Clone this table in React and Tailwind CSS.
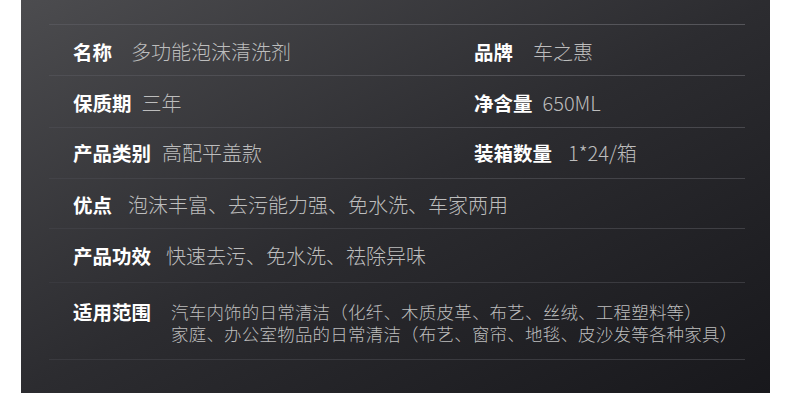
import React from 'react';

const font = { fontFamily: '"Noto Sans CJK SC", "Noto Sans", sans-serif' };

function Item({ label, value, gap }) {
  return (
    <div className="flex items-baseline">
      <span className="text-[19.5px] font-bold text-white">{label}</span>
      <span className={`text-[20px] font-light text-[#bdbdbd] ${gap}`}>{value}</span>
    </div>
  );
}

export default function App() {
  return (
    <div className="w-[790px] h-[419px] bg-white" style={font}>
      <div className="ml-[21px] w-[749px] h-[393px] bg-gradient-to-br from-[#4c4c4f] via-[#2c2c30] to-[#18181c] pt-[24px] pl-[28px] pr-[25px]">
        <div className="border-t border-[#55555a] h-[51px] pl-[24px] flex items-center pt-[3px]">
          <div className="w-[401px]"><Item label="名称" value="多功能泡沫清洗剂" gap="ml-[19px]" /></div>
          <Item label="品牌" value="车之惠" gap="ml-[20px]" />
        </div>
        <div className="border-t border-[#4f4f54] h-[52px] pl-[24px] flex items-center pt-[3px]">
          <div className="w-[401px]"><Item label="保质期" value="三年" gap="ml-[10px]" /></div>
          <Item label="净含量" value="650ML" gap="ml-[10px]" />
        </div>
        <div className="border-t border-[#48484d] h-[51px] pl-[24px] flex items-center">
          <div className="w-[401px]"><Item label="产品类别" value="高配平盖款" gap="ml-[11px]" /></div>
          <Item label="装箱数量" value="1*24/箱" gap="ml-[16px]" />
        </div>
        <div className="border-t border-[#434348] h-[50px] pl-[24px] flex items-center pt-[2px]">
          <Item label="优点" value="泡沫丰富、去污能力强、免水洗、车家两用" gap="ml-[16px]" />
        </div>
        <div className="border-t border-[#3f3f44] h-[54px] pl-[24px] flex items-center">
          <Item label="产品功效" value="快速去污、免水洗、祛除异味" gap="ml-[15px]" />
        </div>
        <div className="border-t border-b border-[#3a3a3f] h-[78px] pl-[24px] flex items-start pt-[16px]">
          <span className="text-[19.5px] font-bold text-white leading-[26px]">适用范围</span>
          <div className="ml-[20px] text-[17.5px] tracking-[0.2px] font-light text-[#bdbdbd] leading-[22px] pt-[2px]">
            <div>汽车内饰的日常清洁（化纤、木质皮革、布艺、丝绒、工程塑料等）</div>
            <div>家庭、办公室物品的日常清洁（布艺、窗帘、地毯、皮沙发等各种家具）</div>
          </div>
        </div>
      </div>
    </div>
  );
}
